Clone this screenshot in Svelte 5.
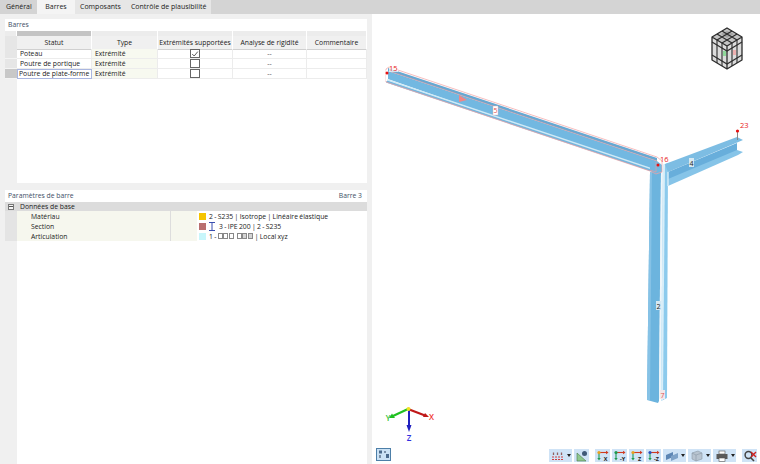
<script lang="ts">
  const tabs = ['Général', 'Barres', 'Composants', 'Contrôle de plausibilité']
  const columns = ['Statut', 'Type', 'Extrémités supportées', 'Analyse de rigidité', 'Commentaire']
  const rows = [
    { name: 'Poteau', type: 'Extrémité', checked: true },
    { name: 'Poutre de portique', type: 'Extrémité', checked: false },
    { name: 'Poutre de plate-forme', type: 'Extrémité', checked: false },
  ]
  const axisButtons = [
    { label: 'X', a: '#e8a020', b: '#d03a20', c: '#1f9a50' },
    { label: '-Y', a: '#1f9a50', b: '#d03a20', c: '#1f9a50' },
    { label: 'Z', a: '#e8a020', b: '#d03a20', c: '#1f9a50' },
    { label: '-Z', a: '#2a4fc0', b: '#d03a20', c: '#1f9a50' },
  ]
</script>

<div class="page">
  <nav class="tabs">
    <span class="tab first">{tabs[0]}</span>
    <span class="tab active">{tabs[1]}</span>
    <span class="tab">{tabs[2]}</span>
    <span class="tab">{tabs[3]}</span>
  </nav>

  <div class="main">
    <div class="left">
      <section class="panel top">
        <div class="panel-title">Barres</div>
        <div class="strip">
          <span class="corner"></span><span class="dark"></span><span></span><span></span><span></span><span></span>
        </div>
        <div class="grid head">
          <span class="rowhead"></span>
          {#each columns as col}
            <span class="cell">{col}</span>
          {/each}
        </div>
        {#each rows as row, i}
          <div class="grid row">
            <span class="rowhead" class:current={i === 2}></span>
            <span class="cell name" class:editing={i === 2}>{row.name}</span>
            <span class="cell type">{row.type}</span>
            <span class="cell center"><span class="check">
              {#if row.checked}
                <svg viewBox="0 0 10 10" width="8" height="8"><path d="M1.5 5 L4 7.5 L8.5 2" fill="none" stroke="#333" stroke-width="1"/></svg>
              {/if}
            </span></span>
            <span class="cell center dash">--</span>
            <span class="cell"></span>
          </div>
        {/each}
        <div class="gutter-fill"></div>
      </section>

      <section class="panel bottom">
        <div class="panel-title split"><span>Paramètres de barre</span><span>Barre 3</span></div>
        <div class="group">
          <span class="toggle"></span>
          <span>Données de base</span>
        </div>
        <div class="props">
          <div class="prop">
            <span class="prop-name">Matériau</span><span class="prop-mid"></span>
            <span class="prop-val"><i class="swatch yellow"></i>2 - S235 | Isotrope | Linéaire élastique</span>
          </div>
          <div class="prop">
            <span class="prop-name">Section</span><span class="prop-mid"></span>
            <span class="prop-val"><i class="swatch brown"></i><svg class="ibeam" viewBox="0 0 6 9" width="6" height="9"><path d="M0 .5H6M0 8.5H6M3 .5V8.5" stroke="#3a4fb0" fill="none"/></svg>3 - IPE 200 | 2 - S235</span>
          </div>
          <div class="prop">
            <span class="prop-name">Articulation</span><span class="prop-mid"></span>
            <span class="prop-val"><i class="swatch cyan"></i>1 - <i class="mini"></i><i class="mini"></i><i class="mini gap"></i><i class="mini"></i><i class="mini on"></i><i class="mini on"></i> | Local xyz</span>
          </div>
        </div>
        <div class="gutter-fill"></div>
      </section>
    </div>

    <div class="view">
      <svg class="scene" viewBox="372 14 388 450" width="388" height="450">
        <!-- column -->
        <path d="M650 172 L661 172 L659 401 L658 403 L647 400 Z" fill="#6cb4de"/>
        <path d="M650 172 L652 172 L650 400 L647 400 Z" fill="#86c2e6"/>
        <path d="M661 172 L663 172 L661 396 L659 400 Z" fill="#eef5f9"/>
        <path d="M663 165 L668 163 L667 398 L661 401 Z" fill="#8ccaec"/>
        <path d="M663 165 L665 164 L663 400 L661 401 Z" fill="#d8eef9"/>

        <!-- beam 4 -->
        <path d="M665 164 L737 137 L743 140 L668 172 Z" fill="#7dbde3"/>
        <path d="M668 172 L737 143 L737 152 L668 181 Z" fill="#68aedb"/>
        <path d="M668 179 L737 150 L743 152 L738 155 L668 186 Z" fill="#86c4e8"/>
        <path d="M668 172 L668 186" stroke="#cfe8f6" stroke-width="1.5"/>

        <!-- beam 3, selected -->
        <path d="M388 68 L657 158 L657 161 L388 71 Z" fill="#66a8d2"/>
        <path d="M388 71 L657 161 L662 165 L662 172 L656 174 L650 171 L388 79 Z" fill="#72b8e1"/>
        <path d="M387 80 L650 169 L650 171 L386 82.5 Z" fill="#72b6de"/>
        <path d="M387 79 L650 167.5 L650 169 L387 80.5 Z" fill="#cfeaf6"/>
        <path d="M386 69 L389 67 L657 157 L662 161 L662 172 L656 174 L650 171 L386 82 Z" fill="none" stroke="#f4a0a0" stroke-width=".7"/>
        <path d="M389 71 L657 161 M650 170 L656 172 L656 162" stroke="#f09a9a" stroke-width=".6" fill="none"/>
        <path d="M386.5 70 L386.5 81" stroke="#fff" stroke-width="1.5"/>
        <path d="M459 95 L467 100 L459 102 Z" fill="#f08686"/>

        <!-- nodes -->
        <circle cx="387" cy="73" r="1.5" fill="#e81010"/>
        <circle cx="658" cy="165" r="1.5" fill="#e81010"/>
        <path d="M737.5 131 V140" stroke="#888"/>
        <circle cx="737.5" cy="131" r="1.6" fill="#e81010"/>
        <rect x="389" y="64" width="9" height="8" fill="#fff" opacity=".7"/>
        <text class="node" x="389" y="71">15</text>
        <text class="node" x="660" y="161.5">16</text>
        <text class="node" x="740" y="127.5">23</text>

        <rect x="493" y="106" width="5" height="9" fill="#fff" stroke="#e8b0b0" stroke-width=".4"/>
        <text class="bar red" x="495.5" y="113">5</text>
        <rect x="689" y="158" width="5" height="9" fill="#d6e8f2"/>
        <text class="bar" x="691.5" y="165.5">4</text>
        <rect x="656" y="301" width="5" height="9" fill="#d6e8f2"/>
        <text class="bar" x="658.5" y="308.5">2</text>
        <rect x="660" y="390" width="5" height="9" fill="#f2e8ea"/>
        <text class="bar red" x="662.5" y="397.5">7</text>

        <!-- nav cube -->
        <g>
          <path d="M712 37 L727 28 L742 37 L742 60 L727 69 L712 60 Z" fill="#dcdcdc"/>
          <path d="M712 37 L727 46 L742 37 L727 28 Z" fill="#c4c4c4"/>
          <path d="M721 34 L727 31 L734 34 L727 38 Z" fill="#a4a4a4"/>
          <path d="M712 37 L727 28 L742 37 L742 60 L727 69 L712 60 Z M712 37 L727 46 L742 37 M727 46 V69" fill="none" stroke="#2c2c2c" stroke-width="1.3" stroke-linejoin="round"/>
          <path d="M717 34 L732 43 M722 31 L737 40 M732 31 L717 40 M737 34 L722 43" stroke="#2c2c2c" stroke-width="1.2"/>
          <path d="M717 40 V63 M732 43 V66 M737 40 V63 M722 43 V66" stroke="#2c2c2c" stroke-width="1.1"/>
          <path d="M712 42 L727 51 L742 42 M712 55 L727 64 L742 55" fill="none" stroke="#2c2c2c" stroke-width="1.1"/>
          <rect x="723" y="51" width="3" height="5" fill="#8fd89a"/>
          <rect x="733" y="50" width="3" height="5" fill="#eeb0b0"/>
        </g>

        <!-- axes -->
        <path d="M408 409 L425 415.5" stroke="#c01818" stroke-width="2.2"/>
        <path d="M429 417 L423 417 L425 413 Z" fill="#c01818"/>
        <path d="M408 409 L393 416" stroke="#20c020" stroke-width="2.2"/>
        <path d="M389 418 L392 413.5 L395 418 Z" fill="#20c020"/>
        <path d="M409 409 V426" stroke="#2020c0" stroke-width="2"/>
        <path d="M409 432 L406.5 425 L411.5 425 Z" fill="#2020c0"/>
        <circle cx="408.5" cy="409" r="2" fill="#f0e020"/>
        <text class="axis x" x="431.5" y="420">X</text>
        <text class="axis y" x="388" y="421">Y</text>
        <text class="axis z" x="409" y="441">Z</text>
      </svg>

      <div class="nav-btn">
        <svg viewBox="0 0 15 13" width="15" height="13">
          <rect x=".5" y=".5" width="14" height="12" fill="#cbe2f5" stroke="#4d7fa8"/>
          <rect x="3" y="2.5" width="3" height="3" fill="#4b6a8c"/>
          <rect x="8" y="3" width="2" height="2" fill="#7a90a8"/>
          <rect x="10" y="6" width="3" height="4" fill="#4b6a8c"/>
          <rect x="3" y="7" width="2" height="3" fill="#7a90a8"/>
        </svg>
      </div>

      <div class="toolbar">
        <span class="tool wide">
          <svg viewBox="0 0 14 12" width="14" height="12"><path d="M1 7H13M1 9.5H13" stroke="#d04040" stroke-dasharray="2 1"/><path d="M2.5 2.5V5M6.5 2.5V5M10.5 2.5V5" stroke="#906060" stroke-width="1.3"/></svg>
          <i class="caret"></i>
        </span>
        <span class="tool">
          <svg viewBox="0 0 14 12" width="14" height="12"><path d="M2 11V3L11 11Z" fill="#8fc88f" stroke="#4a7a4a" stroke-width=".6"/><circle cx="9.5" cy="3.5" r="2.5" fill="#405a78"/></svg>
        </span>
        <span class="sep"></span>
        {#each axisButtons as btn}
          <span class="tool">
            <svg viewBox="0 0 14 12" width="14" height="12">
              <path d="M3 2.5H10" stroke={btn.b} stroke-width="1.1"/>
              <path d="M10 .8L12.5 2.5L10 4.2Z" fill={btn.b}/>
              <path d="M3 2.5V8" stroke={btn.c} stroke-width="1.1"/>
              <path d="M1.3 8L3 10.5L4.7 8Z" fill={btn.c}/>
              <circle cx="3" cy="2.5" r="1.6" fill={btn.a}/>
              <text x="9.5" y="10.5" class="tool-label">{btn.label}</text>
            </svg>
          </span>
        {/each}
        <span class="tool wide">
          <svg viewBox="0 0 14 12" width="14" height="12"><path d="M1 5L8 2V7L1 10Z" fill="#5d86b4"/><path d="M6 6L13 3V8L6 11Z" fill="#7ea2c8"/></svg>
          <i class="caret"></i>
        </span>
        <span class="tool wide">
          <svg viewBox="0 0 14 12" width="14" height="12"><path d="M2 3L8 1L12 3V9L6 11L2 9Z" fill="#b8c4d0" stroke="#8a98a6" stroke-width=".6"/><path d="M6 5V11M6 5L12 3M6 5L2 3" stroke="#8a98a6" stroke-width=".6" fill="none"/></svg>
          <i class="caret"></i>
        </span>
        <span class="tool wide">
          <svg viewBox="0 0 14 12" width="14" height="12"><rect x="4" y="1" width="6" height="3" fill="#fff" stroke="#555" stroke-width=".6"/><rect x="1.5" y="4" width="11" height="5" fill="#5a5a5a"/><rect x="4" y="8" width="6" height="3.5" fill="#fff" stroke="#555" stroke-width=".6"/></svg>
          <i class="caret"></i>
        </span>
        <span class="sep"></span>
        <span class="tool">
          <svg viewBox="0 0 14 12" width="14" height="12"><circle cx="5.5" cy="5" r="3.4" fill="none" stroke="#444" stroke-width="1.5"/><path d="M8 8L11 11" stroke="#444" stroke-width="1.6"/><path d="M8 2L13 7M13 2L8 7" stroke="#d02020" stroke-width="1.4"/></svg>
        </span>
      </div>
    </div>
  </div>
</div>

<style>
  :global(body) {
    margin: 0;
    background: #f0f0f0;
  }

  .page {
    width: 760px;
    height: 464px;
    display: flex;
    flex-direction: column;
    overflow: hidden;
    font-family: 'Open Sans', 'Noto Sans', sans-serif;
    font-size: 6.8px;
    color: #1a1a1a;
  }

  .tabs {
    height: 14px;
    flex: none;
    display: flex;
    background: #d4d4d4;
  }

  .tab {
    padding: 0 5px;
    line-height: 14px;
    background: #e6e6e6;
    font-size: 7px;
  }
  .tab.first {
    background: #d4d4d4;
    width: 37px;
    padding-left: 6px;
    box-sizing: border-box;
  }
  .tab.active {
    background: #f4f4f4;
    width: 38px;
    padding: 0;
    text-align: center;
  }

  .main {
    flex: 1;
    display: flex;
    min-height: 0;
  }

  .left {
    width: 367px;
    flex: none;
    padding: 5px 0 0 5px;
    box-sizing: border-box;
    display: flex;
    flex-direction: column;
    gap: 7px;
  }

  .panel {
    background: #fff;
    display: flex;
    flex-direction: column;
    width: 362px;
  }
  .panel.top {
    height: 164px;
  }
  .panel.bottom {
    flex: 1;
  }

  .panel-title {
    height: 12px;
    line-height: 12px;
    padding-left: 3px;
    color: #3e4f66;
    flex: none;
  }
  .panel-title.split {
    display: flex;
    justify-content: space-between;
    padding-right: 5px;
  }

  .strip,
  .grid {
    display: grid;
    grid-template-columns: 12px 75px 66px 75px 74px 60px;
    flex: none;
  }

  .strip {
    height: 5px;
    background: #fff;
  }
  .strip span {
    background: #ececec;
    border-right: 1px solid #fff;
  }
  .strip .dark {
    background: #c4c4c4;
  }

  .head {
    height: 13px;
    background: #f0f0f0;
  }
  .head .cell {
    text-align: center;
    line-height: 13px;
    white-space: nowrap;
    border-right: 1px solid #fff;
    border-bottom: 1px solid #d0d0d0;
    box-sizing: border-box;
  }

  .row {
    height: 10px;
  }

  .rowhead {
    background: #e6e6e6;
    border-bottom: 1px solid #f4f4f4;
    box-sizing: border-box;
  }
  .rowhead.current {
    background: #c8c8c8;
  }

  .row .cell {
    line-height: 9.5px;
    border-right: 1px solid #ececec;
    border-bottom: 1px solid #ececec;
    box-sizing: border-box;
    white-space: nowrap;
    overflow: hidden;
  }

  .name {
    padding-left: 3px;
  }
  .name.editing {
    padding-left: 2px;
    outline: 1px solid #a9b6e0;
    outline-offset: -1px;
  }

  .type {
    padding-left: 3px;
    background: #f7f9f0;
  }

  .center {
    display: flex;
    justify-content: center;
    align-items: center;
  }

  .dash {
    color: #555;
  }

  .check {
    width: 8px;
    height: 7px;
    border: 1px solid #666;
    background: #fff;
    display: flex;
    align-items: center;
    justify-content: center;
    overflow: hidden;
  }

  .gutter-fill {
    flex: 1;
    width: 12px;
    background: #f0f0f0;
  }

  .group {
    height: 9px;
    line-height: 9px;
    background: #dcdcdc;
    display: flex;
    align-items: center;
    gap: 6px;
    padding-left: 3px;
    flex: none;
  }

  .toggle {
    width: 6px;
    height: 6px;
    border: 1px solid #777;
    box-sizing: border-box;
    background: linear-gradient(#555, #555) center / 4px 1px no-repeat, #f4f4f4;
  }

  .props {
    flex: none;
    border-left: 12px solid #e4e4e4;
  }

  .prop {
    display: grid;
    grid-template-columns: 153px 27px 1fr;
    grid-template-rows: 10px;
    line-height: 11px;
  }

  .prop-name {
    background: #f6f7ee;
    padding-left: 14px;
    overflow: hidden;
  }
  .prop-mid {
    background: #f6f7ee;
    border-left: 1px solid #ddd;
  }
  .prop-val {
    padding-left: 2px;
    display: flex;
    align-items: center;
    white-space: pre;
    word-spacing: -0.4px;
    line-height: 9px;
  }

  .swatch {
    width: 7px;
    height: 7px;
    margin-right: 3px;
    flex: none;
  }
  .yellow {
    background: #f5c400;
  }
  .brown {
    background: #b96f6f;
  }
  .cyan {
    background: #c8f6fb;
  }

  .ibeam {
    margin-right: 4px;
  }

  .mini {
    width: 3px;
    height: 4px;
    border: 0.5px solid #888;
    margin-right: 0.5px;
  }
  .mini.gap {
    margin-right: 3px;
  }
  .mini.on {
    background: #d4d4d4;
  }

  .view {
    flex: 1;
    position: relative;
    background: #fff;
    margin-left: 5px;
  }

  .scene {
    display: block;
  }

  .node {
    font-size: 7.5px;
    fill: #e81818;
    font-family: 'Open Sans', sans-serif;
  }

  .bar {
    font-size: 7px;
    fill: #222;
    text-anchor: middle;
    font-family: 'Open Sans', sans-serif;
  }
  .bar.red {
    fill: #e05050;
  }

  .axis {
    font-size: 8px;
    font-weight: 600;
    text-anchor: middle;
    font-family: 'Open Sans', sans-serif;
  }
  .axis.x {
    fill: #f03030;
  }
  .axis.y {
    fill: #30c030;
  }
  .axis.z {
    fill: #3030e0;
  }

  .nav-btn {
    position: absolute;
    left: 4px;
    top: 434px;
    height: 13px;
  }
  .nav-btn svg {
    display: block;
  }

  .toolbar {
    position: absolute;
    right: 3px;
    top: 435px;
    display: flex;
    gap: 2px;
  }

  .tool {
    width: 15px;
    height: 13px;
    background: #cfe3f6;
    display: flex;
    align-items: center;
    justify-content: center;
  }
  .tool.wide {
    width: 23px;
    gap: 2px;
  }

  .sep {
    width: 2px;
  }

  .caret {
    width: 0;
    height: 0;
    border-left: 2.5px solid transparent;
    border-right: 2.5px solid transparent;
    border-top: 3px solid #222;
  }

  .tool-label {
    font-size: 5.5px;
    font-weight: 700;
    fill: #222;
    text-anchor: middle;
    font-family: 'Open Sans', sans-serif;
  }
</style>
